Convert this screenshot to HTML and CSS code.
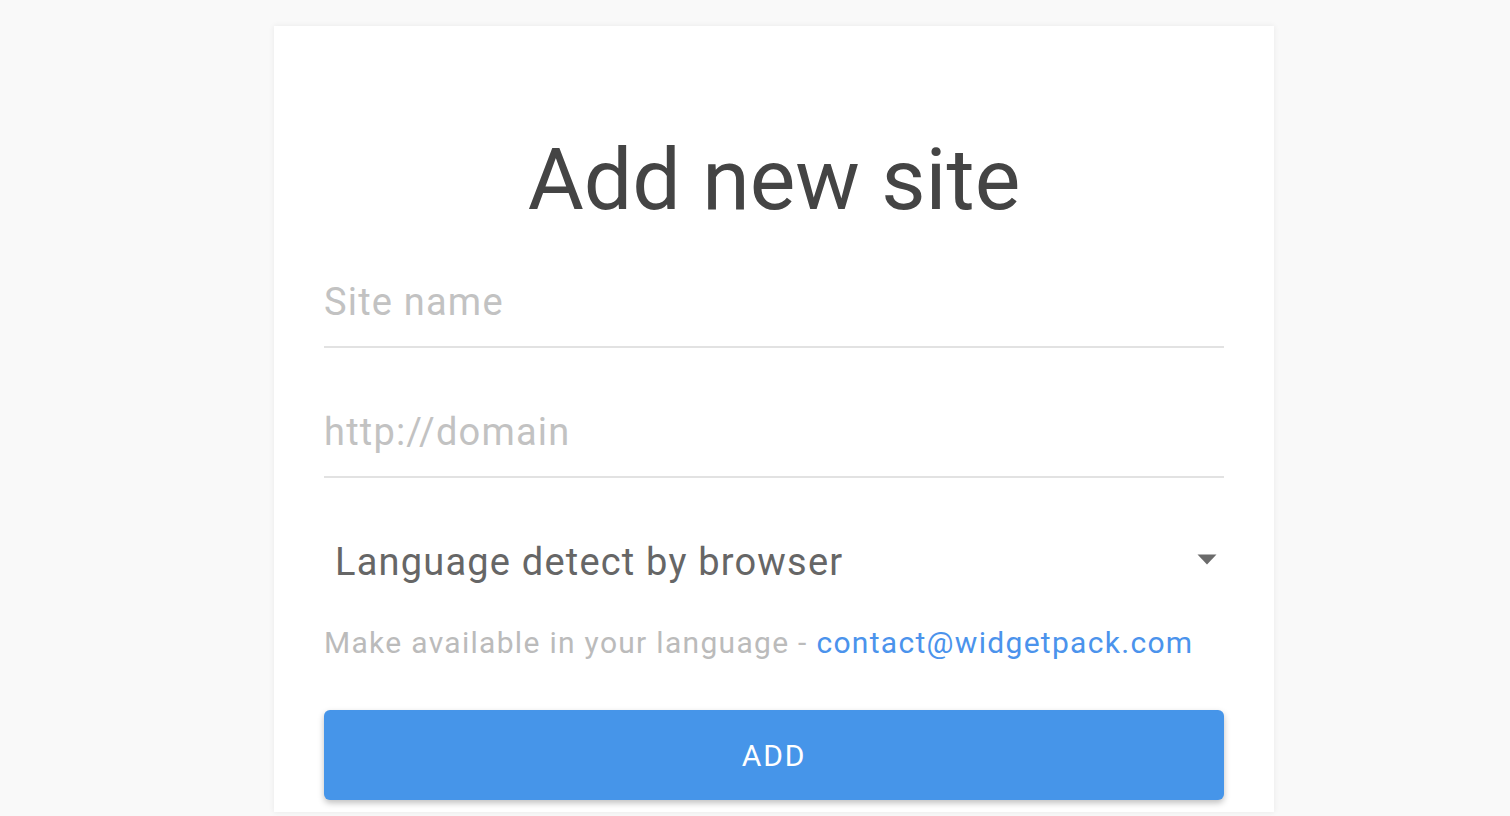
FILE: index.html
```html
<!DOCTYPE html>
<html lang="en">
<head>
<meta charset="utf-8">
<title>Add new site</title>
<link rel="stylesheet" href="styles.css">
</head>
<body>
<div class="page">
  <div class="card">
    <h1 class="title">Add new site</h1>
    <form class="form">
      <input class="field" type="text" placeholder="Site name">
      <input class="field field-gap" type="text" placeholder="http://domain">
      <div class="select field-gap">
        <span class="select-text">Language detect by browser</span>
        <svg class="select-arrow" width="20" height="11" viewBox="0 0 20 11"><path d="M0.5 0.5 L19.5 0.5 L10 10.5 Z" fill="#6b6b6b"/></svg>
      </div>
      <p class="help">Make available in your language - <a class="help-link" href="#">contact@widgetpack.com</a></p>
      <button class="btn" type="button">ADD</button>
    </form>
  </div>
</div>
</body>
</html>
```
FILE: styles.css
```css
html, body {
  margin: 0;
  padding: 0;
  background: #f9f9f9;
  height: 100%;
  overflow: hidden;
}
body {
  font-family: Roboto, "Liberation Sans", sans-serif;
}
.page {
  padding: 26px 0 0 274px;
}
.card {
  width: 1000px;
  height: 786px;
  box-sizing: border-box;
  background: #fff;
  box-shadow: 0 0 6px rgba(0, 0, 0, 0.07);
  padding: 104px 50px 0 50px;
}
.title {
  margin: 0;
  font-size: 86px;
  line-height: 100px;
  font-weight: 400;
  color: #444;
  text-align: center;
}
.form {
  margin-top: 28px;
  display: flex;
  flex-direction: column;
}
.field {
  display: block;
  width: 100%;
  height: 90px;
  box-sizing: border-box;
  margin: 0;
  padding: 0;
  border: none;
  border-bottom: 2px solid #e2e2e2;
  outline: none;
  font-family: Roboto, "Liberation Sans", sans-serif;
  font-size: 38px;
  letter-spacing: 1.2px;
  color: #444;
  background: transparent;
}
.field::placeholder {
  color: #c2c2c2;
}
.field-gap {
  margin-top: 40px;
}
.select {
  height: 88px;
  display: flex;
  align-items: center;
  justify-content: space-between;
  padding: 0 7px 0 11px;
}
.select-text {
  font-size: 38px;
  line-height: 44px;
  letter-spacing: 1.2px;
  color: #666;
}
.select-arrow {
  display: block;
  margin-top: -6px;
}
.help {
  margin: 19px 0 0 0;
  font-size: 30px;
  line-height: 36px;
  letter-spacing: 1.3px;
  color: #bbbbbb;
}
.help-link {
  color: #4b93ec;
  text-decoration: none;
}
.btn {
  margin-top: 49px;
  height: 90px;
  width: 100%;
  border: none;
  border-radius: 6px;
  background: #4695e9;
  color: #fff;
  font-family: Roboto, "Liberation Sans", sans-serif;
  font-size: 30px;
  letter-spacing: 1.8px;
  box-shadow: 0 3px 6px rgba(0, 0, 0, 0.25);
  cursor: pointer;
}
```
